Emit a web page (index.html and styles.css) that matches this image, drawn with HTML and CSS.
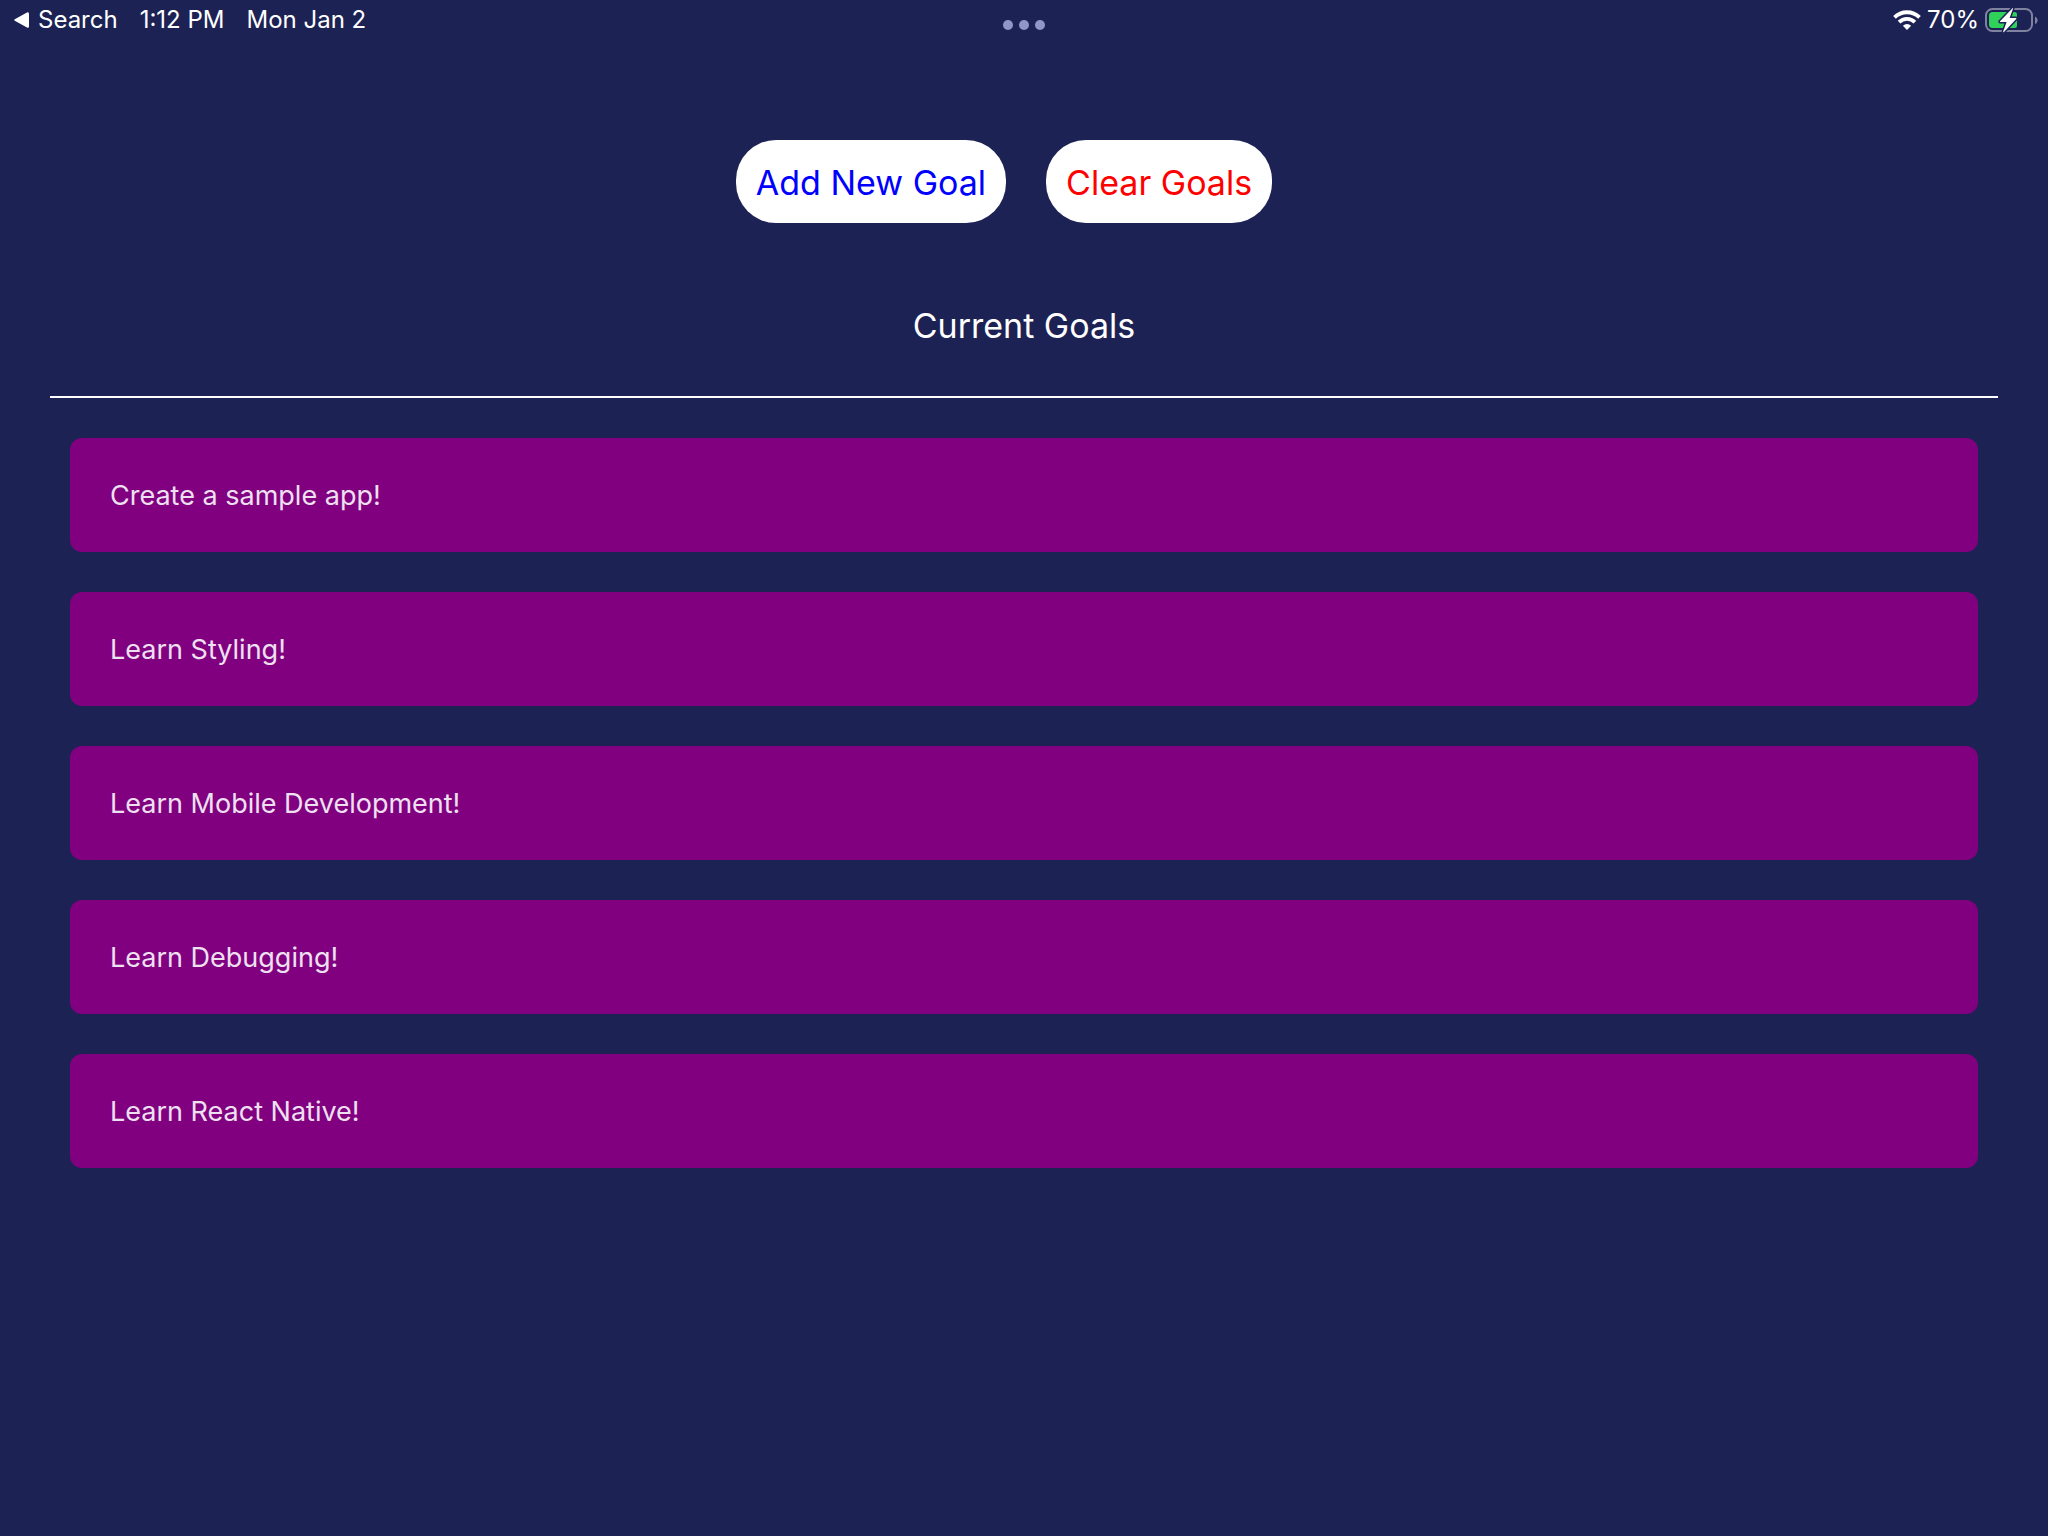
FILE: index.html
```
<!DOCTYPE html>
<html lang="en">
<head>
<meta charset="utf-8">
<meta name="viewport" content="width=device-width, initial-scale=1">
<title>Current Goals</title>
<link rel="stylesheet" href="styles.css">
</head>
<body>
<header class="status">
  <div class="status-left">
    <a class="back" href="#"><svg class="back-icon" viewBox="0 0 15 16" aria-hidden="true"><path d="M1.200 6.900 13 .4Q15 -.3 15 1.800V14.200Q15 16.300 13 15.600L1.200 9.100Q-.8 8 1.200 6.900Z" fill="#fff"/></svg>Search</a>
    <span>1:12 PM</span>
    <span>Mon Jan 2</span>
  </div>
  <button class="dots" type="button" aria-label="Multitasking"><i></i><i></i><i></i></button>
  <div class="status-right">
    <svg class="wifi" viewBox="0 0 28 20" aria-hidden="true">
      <g fill="none" stroke="#fff" stroke-width="3.800">
        <path d="M1.500 7.400a17.800 17.800 0 0 1 25 0"/>
        <path d="M6.100 12.200a11.200 11.200 0 0 1 15.800 0"/>
      </g>
      <path d="M14 20 9.900 15.700a6 6 0 0 1 8.200 0Z" fill="#fff"/>
    </svg>
    <span>70%</span>
    <svg class="battery" viewBox="0 0 53 26" role="img" aria-label="Charging">
      <rect x="1" y="2" width="46" height="22" rx="6.500" fill="none" stroke="#8083a0" stroke-width="2"/>
      <path d="M50 9.500q2.600 1 2.600 3.700t-2.600 3.700z" fill="#8083a0"/>
      <path d="M7.500 5H29.500Q32 5 32 7.500V18.500Q32 21 29.500 21H7.500Q4 21 4 17.500V8.500Q4 5 7.500 5Z" fill="#30d158"/>
      <path d="M27.500 1.200 15 14.200q-.6.900.4.900h6.200l-3.400 9.300q-.3 1.400.8.500L31.200 12q.7-1-.4-1h-6.200L28 1.800q.3-1.200-.5-.6z" fill="#fff" stroke="#1d2254" stroke-width="3" paint-order="stroke" stroke-linejoin="round"/>
    </svg>
  </div>
</header>
<main class="app">
  <div class="actions">
    <button class="pill add" type="button">Add New Goal</button>
    <button class="pill clear" type="button">Clear Goals</button>
  </div>
  <h1 class="title">Current Goals</h1>
  <ul class="goals">
    <li class="goal">Create a sample app!</li>
    <li class="goal">Learn Styling!</li>
    <li class="goal">Learn Mobile Development!</li>
    <li class="goal">Learn Debugging!</li>
    <li class="goal">Learn React Native!</li>
  </ul>
</main>
</body>
</html>
```
FILE: styles.css
```
* { box-sizing: border-box; }
body {
  margin: 0;
  min-height: 100vh;
  background: #1d2254;
  color: #fff;
  font-family: Inter, "Liberation Sans", sans-serif;
}
.status {
  display: grid;
  grid-template-columns: 1fr auto 1fr;
  height: 40px;
  padding: 0 10px 0 14px;
  font-size: 24px;
  line-height: 40px;
}
.status-left { display: flex; gap: 22px; }
.back { display: flex; align-items: center; gap: 9px; color: inherit; text-decoration: none; }
.back-icon { width: 15px; height: 16px; }
.dots {
  display: flex;
  gap: 6px;
  align-self: end;
  padding: 10px 4px 10px 0;
  border: 0;
  background: none;
}
.dots i { width: 10px; height: 10px; border-radius: 50%; background: #9196c8; }
.status-right { display: flex; justify-content: flex-end; align-items: center; gap: 6px; }
.wifi { width: 28px; height: 20px; }
.battery { width: 53px; height: 26px; }
.app { padding: 100px 50px 0; }
.actions { display: flex; justify-content: center; gap: 40px; padding-right: 40px; }
.pill {
  padding: 21px 20px 19px;
  border: 0;
  border-radius: 40px;
  background: #fff;
  font-family: inherit;
  font-size: 34px;
  line-height: 43px;
}
.add { color: #00f; }
.clear { color: #f00; }
.title {
  margin: 0;
  padding: 81px 0 49px;
  border-bottom: 2px solid #fff;
  font-size: 34px;
  font-weight: 400;
  line-height: 43px;
  text-align: center;
}
.goals {
  display: grid;
  gap: 40px;
  margin: 0;
  padding: 40px 20px;
  list-style: none;
}
.goal {
  padding: 41px 40px 39px;
  border-radius: 12px;
  background: #800080;
  color: #eee0f0;
  font-size: 27px;
  line-height: 34px;
}
```
